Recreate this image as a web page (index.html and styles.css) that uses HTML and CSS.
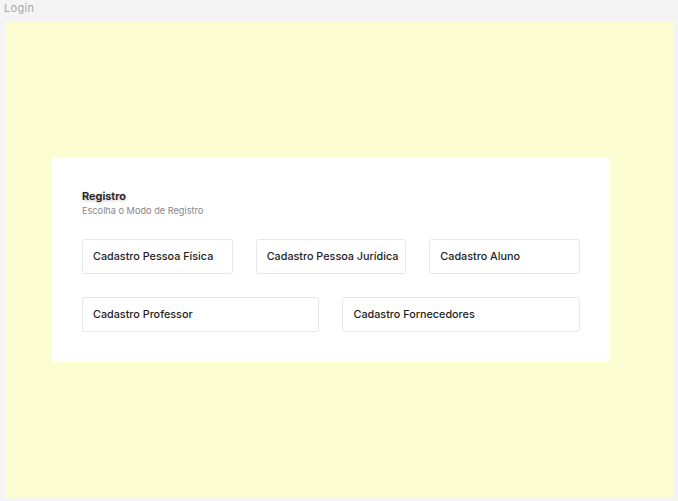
FILE: index.html
```html
<!DOCTYPE html>
<html lang="pt">
<head>
<meta charset="utf-8">
<title>Login</title>
<link rel="stylesheet" href="styles.css">
</head>
<body>
<div class="topbar">Login</div>
<main class="stage">
  <section class="card">
    <h1 class="title">Registro</h1>
    <p class="subtitle">Escolha o Modo de Registro</p>
    <div class="options">
      <button class="opt third">Cadastro Pessoa Física</button>
      <button class="opt third">Cadastro Pessoa Jurídica</button>
      <button class="opt third">Cadastro Aluno</button>
      <button class="opt half">Cadastro Professor</button>
      <button class="opt half">Cadastro Fornecedores</button>
    </div>
  </section>
</main>
</body>
</html>
```
FILE: styles.css
```css
html, body {
  margin: 0;
  padding: 0;
  background: #f4f4f4;
  font-family: Inter, "Noto Sans", sans-serif;
}
body {
  height: 501px;
  overflow: hidden;
}
.topbar {
  height: 22px;
  line-height: 17px;
  padding-left: 4px;
  font-size: 11px;
  color: #a9a9a9;
  letter-spacing: 0.3px;
}
.stage {
  margin: 0 4px 0 5px;
  height: 476px;
  background: #fcfdd0;
  display: flex;
  align-items: center;
  padding-left: 47px;
  box-sizing: border-box;
}
.card {
  width: 558px;
  box-sizing: border-box;
  background: #fff;
  padding: 30px 30px 30px 30px;
}
.title {
  margin: 0;
  font-size: 11px;
  line-height: 16px;
  font-weight: 600;
  color: #222;
  text-shadow: 0 1px 3px rgba(0,0,0,0.3);
}
.subtitle {
  margin: 0;
  font-size: 9.2px;
  line-height: 14px;
  color: #888;
}
.options {
  margin-top: 21px;
  display: grid;
  grid-template-columns: repeat(6, 1fr);
  column-gap: 23px;
  row-gap: 23px;
}
.opt {
  height: 35px;
  background: #fff;
  border: 1px solid #e7e7e7;
  border-radius: 3px;
  text-align: left;
  padding: 0 0 0 10px;
  font-family: Inter, "Noto Sans", sans-serif;
  font-size: 10.8px;
  font-weight: 500;
  color: #1d1d1d;
  white-space: nowrap;
}
.third { grid-column: span 2; }
.half { grid-column: span 3; }
```
